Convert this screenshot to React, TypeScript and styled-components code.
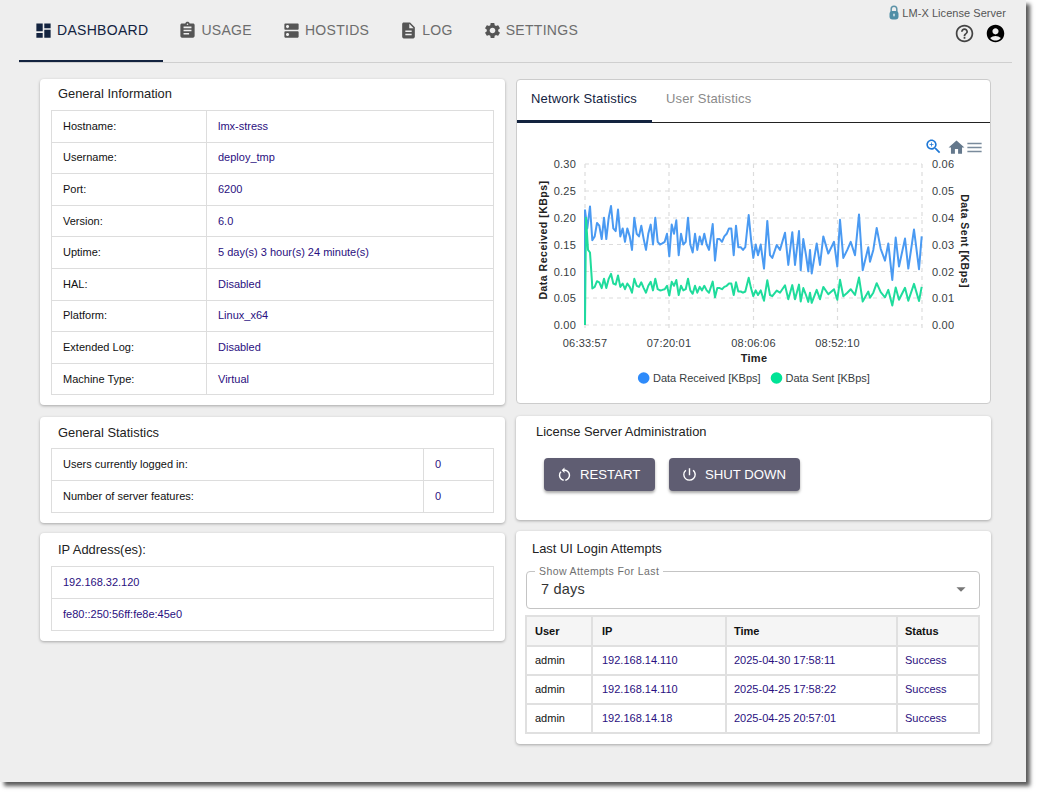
import styled, { createGlobalStyle } from "styled-components"
import { ReactNode } from "react"
import {
    MdDashboard, MdAssignment, MdDns, MdDescription, MdSettings, MdHelpOutline,
    MdAccountCircle, MdRestartAlt, MdPowerSettingsNew, MdArrowDropDown, MdHome, MdMenu
} from "react-icons/md"

const GlobalStyle = createGlobalStyle`
    html, body {
        margin: 0;
        padding: 0;
        min-height: 797px;
        background: #fff;
        font-family: "Liberation Sans", Arial, sans-serif;
    }
`

const Window = styled.div`
    width: 1026px;
    height: 782px;
    background: #eeeeee;
    box-shadow: 4px 4px 4px rgba(0, 0, 0, .65);
    overflow: hidden;
`

const Header = styled.header`
    display: flex;
    justify-content: space-between;
    height: 62px;
    margin: 0 14px 0 19px;
    border-bottom: 1px solid #cfcfcf;
`

const Tabs = styled.nav`
    display: flex;
`

const Tab = styled.div<{ $active?: boolean }>`
    display: flex;
    align-items: center;
    gap: 4px;
    height: 60px;
    padding: 0 15px 0 15px;
    font-size: 14px;
    letter-spacing: .3px;
    color: ${p => p.$active ? "#13233f" : "#6d6d6d"};
    border-bottom: 2px solid ${p => p.$active ? "#13233f" : "transparent"};
    svg {
        font-size: 19px;
        color: ${p => p.$active ? "#13233f" : "#555"};
    }
`

const Product = styled.div`
    display: flex;
    flex-direction: column;
    align-items: flex-end;
    padding: 5px 6px 0 0;
`

const ProductName = styled.div`
    display: flex;
    align-items: center;
    gap: 3px;
    font-size: 11px;
    letter-spacing: .05px;
    color: #555;
`

const HeaderIcons = styled.div`
    display: flex;
    gap: 10px;
    margin-top: 3px;
    svg {
        font-size: 21px;
    }
`

const Columns = styled.main`
    display: flex;
    gap: 11px;
    padding: 16px 0 0 40px;
`

const Column = styled.div<{ $width: number }>`
    display: flex;
    flex-direction: column;
    width: ${p => p.$width}px;
`

const Card = styled.section<{ $height: number; $mb?: number; $px?: number }>`
    box-sizing: border-box;
    height: ${p => p.$height}px;
    margin-bottom: ${p => p.$mb || 0}px;
    padding: 0 ${p => p.$px ?? 11}px;
    background: #fff;
    border-radius: 4px;
    box-shadow: 0 1px 3px rgba(0, 0, 0, .3);
`

const Title = styled.h3<{ $height?: number; $indent?: number }>`
    display: flex;
    align-items: center;
    height: ${p => p.$height || 29}px;
    margin: 0 0 ${p => p.$height ? 0 : 2}px;
    padding-left: ${p => p.$indent ?? 7}px;
    font-size: 12.9px;
    font-weight: normal;
    color: #222;
`

const Table = styled.table<{ $row: number }>`
    width: 100%;
    border-collapse: collapse;
    table-layout: fixed;
    font-size: 11px;
    td {
        height: ${p => p.$row - 1}px;
        padding: 0 0 1px 11px;
        border: 1px solid #dddddd;
        color: #2a0f80;
    }
    td.label {
        color: #111;
    }
`

const LoginTable = styled.table`
    width: 100%;
    margin-left: -1px;
    border-collapse: collapse;
    table-layout: fixed;
    font-size: 11px;
    th, td {
        height: 26px;
        padding: 0 0 1px 7px;
        border: 2px solid #e0e0e0;
        text-align: left;
    }
    th {
        height: 27px;
        background: #f5f5f5;
        color: #111;
    }
    th:first-child, td:first-child {
        padding-left: 8px;
    }
    th:nth-child(2), td:nth-child(2) {
        padding-left: 9px;
    }
    td {
        color: #2a0f80;
    }
    td.user {
        color: #111;
    }
`

const TabCard = styled.section`
    box-sizing: border-box;
    height: 325px;
    margin-bottom: 12px;
    background: #fff;
    border: 1px solid #cccccc;
    border-radius: 4px;
`

const ChartTabs = styled.div`
    display: flex;
    height: 42px;
    border-bottom: 1px solid #222;
`

const ChartTab = styled.div<{ $active?: boolean }>`
    display: flex;
    align-items: center;
    box-sizing: border-box;
    height: 43px;
    padding: 0 15px 3px 14px;
    font-size: 13px;
    letter-spacing: .15px;
    color: ${p => p.$active ? "#13233f" : "#8a8a8a"};
    border-bottom: 3px solid ${p => p.$active ? "#13233f" : "transparent"};
`

const ChartSvg = styled.svg`
    display: block;
    font-family: "Liberation Sans", Arial, sans-serif;
`

const Buttons = styled.div`
    display: flex;
    gap: 14px;
    padding: 11px 0 0 18px;
`

const Button = styled.button<{ $width: number }>`
    display: flex;
    align-items: center;
    gap: 7px;
    box-sizing: border-box;
    width: ${p => p.$width}px;
    height: 33px;
    padding: 0 0 0 12px;
    border: 0;
    border-radius: 4px;
    background: #5f5d72;
    color: #fff;
    font-family: inherit;
    font-size: 13.2px;
    box-shadow: 0 2px 3px rgba(0, 0, 0, .35);
    svg {
        font-size: 17px;
    }
`

const SelectBox = styled.fieldset`
    display: flex;
    align-items: center;
    justify-content: space-between;
    box-sizing: border-box;
    height: 43px;
    margin: 0 1px 6px 0;
    padding: 0 7px 8px 14px;
    border: 1px solid #c4c4c4;
    border-radius: 4px;
    legend {
        margin-left: -6px;
        padding: 0 4px;
        font-size: 10.5px;
        letter-spacing: .4px;
        line-height: 11px;
        color: #6f6f6f;
    }
    span {
        font-size: 14.5px;
        letter-spacing: .2px;
        color: #333;
    }
    svg {
        font-size: 22px;
        color: #777;
    }
`

const generalInfo = [
    ["Hostname:", "lmx-stress"],
    ["Username:", "deploy_tmp"],
    ["Port:", "6200"],
    ["Version:", "6.0"],
    ["Uptime:", "5 day(s) 3 hour(s) 24 minute(s)"],
    ["HAL:", "Disabled"],
    ["Platform:", "Linux_x64"],
    ["Extended Log:", "Disabled"],
    ["Machine Type:", "Virtual"],
]

const logins = [
    ["admin", "192.168.14.110", "2025-04-30 17:58:11", "Success"],
    ["admin", "192.168.14.110", "2025-04-25 17:58:22", "Success"],
    ["admin", "192.168.14.18", "2025-04-25 20:57:01", "Success"],
]

// traced from the chart: x offset (1/3 px) and KBps received
const received: [number, number][] = [
    [195, .214], [202, .18], [210, .221], [217, .158], [224, .165], [231, .19], [238, .185], [245, .16],
    [252, .2], [259, .16], [266, .2], [273, .222], [280, .18], [287, .175], [294, .215], [301, .165],
    [308, .18], [315, .155], [322, .18], [329, .165], [336, .14], [343, .2], [350, .17], [357, .165],
    [364, .185], [371, .16], [378, .14], [385, .17], [392, .187], [399, .15], [406, .2], [413, .155],
    [420, .15], [427, .152], [434, .155], [441, .17], [448, .128], [455, .187], [462, .17], [469, .195],
    [476, .13], [483, .17], [490, .15], [497, .155], [504, .2], [511, .15], [518, .135], [525, .17],
    [532, .14], [539, .165], [546, .15], [553, .17], [560, .15], [567, .14], [578, .188], [585, .12],
    [592, .16], [599, .16], [606, .155], [613, .165], [620, .17], [627, .18], [634, .18], [641, .13],
    [648, .185], [655, .145], [662, .145], [669, .14], [676, .145], [686, .205], [693, .16], [700, .125],
    [707, .15], [714, .13], [722, .15], [732, .105], [742, .194], [750, .13], [757, .125], [770, .149],
    [780, .14], [795, .172], [805, .112], [817, .173], [825, .112], [837, .175], [842, .102], [850, .16],
    [858, .13], [865, .1], [870, .14], [875, .096], [890, .152], [900, .112], [910, .165], [925, .133],
    [942, .155], [952, .109], [960, .196], [970, .125], [982, .14], [992, .155], [1005, .13], [1017, .206],
    [1028, .102], [1045, .145], [1050, .118], [1060, .14], [1070, .181], [1082, .142], [1095, .12], [1105, .152],
    [1117, .084], [1127, .163], [1137, .109], [1155, .161], [1165, .105], [1182, .178], [1197, .104], [1205, .165],
]

const toX = (x: number) => 520 + x / 3
const toY = (v: number) => 325 - v / .3 * 161

const bluePoints = [[585, 325], ...received.map(([x, v]) => [toX(x), toY(v)])]
const greenPoints = [
    [585, 325], [586, toY(.2)], [588, toY(.14)], [590, toY(.135)], [592, toY(.08)],
    ...received.slice(3).map(([x, v]) => [toX(x), toY(v * .43)]),
]
const line = (points: number[][]) => points.map(p => p[0].toFixed(1) + "," + p[1].toFixed(1)).join(" ")

const gridX = [585, 669, 753.5, 837.5, 922]
const gridY = [164, 191, 218, 244.5, 271.5, 298, 325]
const leftLabels = ["0.30", "0.25", "0.20", "0.15", "0.10", "0.05", "0.00"]
const rightLabels = ["0.06", "0.05", "0.04", "0.03", "0.02", "0.01", "0.00"]
const timeLabels = ["06:33:57", "07:20:01", "08:06:06", "08:52:10"]

const Lock = () => (
    <svg width="10" height="15" viewBox="0 0 10 15">
        <path d="M2.2 7V4a2.8 2.8 0 0 1 5.6 0v3" fill="none" stroke="#5d93a8" strokeWidth="1.5" />
        <rect x=".5" y="6" width="9" height="8.5" rx="3" fill="#4f8ea6" />
        <rect x="4.2" y="8.5" width="1.6" height="3" rx=".8" fill="#cfe2ea" />
    </svg>
)

const Chart = () => (
    <ChartSvg width="473" height="280" viewBox="517 123 473 280">
        {gridY.map(y => <line key={y} x1="585" x2="922" y1={y} y2={y} stroke="#dcdcdc" strokeWidth="1.2" strokeDasharray="4" />)}
        {gridX.map(x => <line key={x} x1={x} x2={x} y1="164" y2="331" stroke="#dcdcdc" strokeWidth="1.2" strokeDasharray="4" />)}
        <polyline points={line(bluePoints)} fill="none" stroke="#4a9af2" strokeWidth="2" strokeLinejoin="round" />
        <polyline points={line(greenPoints)} fill="none" stroke="#1fdc9c" strokeWidth="2" strokeLinejoin="round" />
        <g fontSize="11" fill="#373d3f" letterSpacing=".2">
            {leftLabels.map((t, i) => <text key={t} x="576" y={gridY[i] + 4} textAnchor="end">{t}</text>)}
            {rightLabels.map((t, i) => <text key={t} x="932" y={gridY[i] + 4}>{t}</text>)}
            {timeLabels.map((t, i) => <text key={t} x={gridX[i]} y="347" textAnchor="middle">{t}</text>)}
        </g>
        <g fontWeight="bold" fill="#222">
            <text fontSize="11" x="754" y="362" textAnchor="middle" letterSpacing=".3">Time</text>
            <text fontSize="10.5" letterSpacing=".5" transform="translate(547 240) rotate(-90)" textAnchor="middle">Data Received [KBps]</text>
            <text fontSize="10.5" letterSpacing=".5" transform="translate(961 241) rotate(90)" textAnchor="middle">Data Sent [KBps]</text>
        </g>
        <circle cx="643.7" cy="378" r="5.8" fill="#2e8bfa" />
        <circle cx="776.5" cy="378" r="5.8" fill="#00e396" />
        <g fontSize="11" fill="#373d3f">
            <text x="653" y="382">Data Received [KBps]</text>
            <text x="785.5" y="382">Data Sent [KBps]</text>
        </g>
        <svg x="924" y="137" width="19" height="19" viewBox="0 0 24 24" fill="#1f78d6">
            <path d="M15.5 14h-.79l-.28-.27C15.41 12.59 16 11.11 16 9.5 16 5.91 13.09 3 9.5 3S3 5.91 3 9.5 5.91 16 9.5 16c1.61 0 3.09-.59 4.23-1.57l.27.28v.79l5 4.99L20.49 19l-4.99-5zm-6 0C7.01 14 5 11.99 5 9.5S7.01 5 9.5 5 14 7.01 14 9.5 11.99 14 9.5 14z" />
            <path d="M12 10h-2v2H9v-2H7V9h2V7h1v2h2v1z" />
        </svg>
        <MdHome x="947" y="138" size="19" color="#64788c" />
        <MdMenu x="965" y="138" size="19" color="#7a8b9c" />
    </ChartSvg>
)

const NavTab = ({ icon, label, active }: { icon: ReactNode; label: string; active?: boolean }) => (
    <Tab $active={active}>{icon}{label}</Tab>
)

export default function App() {
    return (
        <Window>
            <GlobalStyle />
            <Header>
                <Tabs>
                    <NavTab active icon={<MdDashboard />} label="DASHBOARD" />
                    <NavTab icon={<MdAssignment />} label="USAGE" />
                    <NavTab icon={<MdDns />} label="HOSTIDS" />
                    <NavTab icon={<MdDescription />} label="LOG" />
                    <NavTab icon={<MdSettings />} label="SETTINGS" />
                </Tabs>
                <Product>
                    <ProductName><Lock />LM-X License Server</ProductName>
                    <HeaderIcons>
                        <MdHelpOutline color="#444" />
                        <MdAccountCircle color="#000" />
                    </HeaderIcons>
                </Product>
            </Header>
            <Columns>
                <Column $width={465}>
                    <Card $height={326} $mb={12}>
                        <Title>General Information</Title>
                        <Table $row={30.6}>
                            <colgroup><col width="155" /><col /></colgroup>
                            <tbody>
                                {generalInfo.map(([k, v]) => (
                                    <tr key={k}><td className="label">{k}</td><td>{v}</td></tr>
                                ))}
                            </tbody>
                        </Table>
                    </Card>
                    <Card $height={106} $mb={10}>
                        <Title $height={31}>General Statistics</Title>
                        <Table $row={31}>
                            <colgroup><col width="372" /><col /></colgroup>
                            <tbody>
                                <tr><td className="label">Users currently logged in:</td><td>0</td></tr>
                                <tr><td className="label">Number of server features:</td><td>0</td></tr>
                            </tbody>
                        </Table>
                    </Card>
                    <Card $height={108}>
                        <Title $height={33}>IP Address(es):</Title>
                        <Table $row={31}>
                            <tbody>
                                <tr><td>192.168.32.120</td></tr>
                                <tr><td>fe80::250:56ff:fe8e:45e0</td></tr>
                            </tbody>
                        </Table>
                    </Card>
                </Column>
                <Column $width={475}>
                    <TabCard>
                        <ChartTabs>
                            <ChartTab $active>Network Statistics</ChartTab>
                            <ChartTab>User Statistics</ChartTab>
                        </ChartTabs>
                        <Chart />
                    </TabCard>
                    <Card $height={104} $mb={11} $px={10}>
                        <Title $height={31} $indent={10}>License Server Administration</Title>
                        <Buttons>
                            <Button $width={111}><MdRestartAlt />RESTART</Button>
                            <Button $width={131}><MdPowerSettingsNew />SHUT DOWN</Button>
                        </Buttons>
                    </Card>
                    <Card $height={213} $px={10}>
                        <Title $height={35} $indent={6}>Last UI Login Attempts</Title>
                        <SelectBox>
                            <legend>Show Attempts For Last</legend>
                            <span>7 days</span>
                            <MdArrowDropDown />
                        </SelectBox>
                        <LoginTable>
                            <colgroup><col width="66" /><col width="134" /><col width="171" /><col /></colgroup>
                            <thead>
                                <tr><th>User</th><th>IP</th><th>Time</th><th>Status</th></tr>
                            </thead>
                            <tbody>
                                {logins.map(row => (
                                    <tr key={row[2]}>
                                        <td className="user">{row[0]}</td>
                                        <td>{row[1]}</td>
                                        <td>{row[2]}</td>
                                        <td>{row[3]}</td>
                                    </tr>
                                ))}
                            </tbody>
                        </LoginTable>
                    </Card>
                </Column>
            </Columns>
        </Window>
    )
}
